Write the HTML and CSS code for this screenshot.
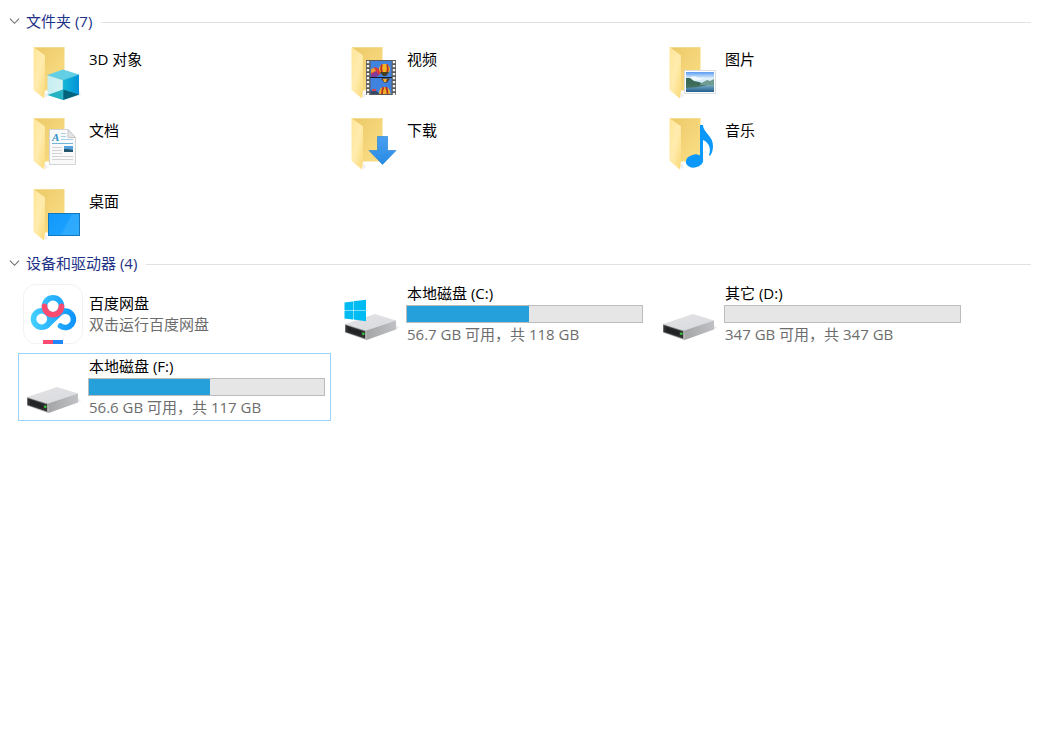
FILE: index.html
```html
<!DOCTYPE html>
<html lang="zh-CN">
<head>
    <meta charset="UTF-8">
    <meta name="viewport" content="width=device-width, initial-scale=1.0">
    <title>此电脑</title>
    <link rel="stylesheet" href="styles.css">
</head>
<body>
    <!-- shared shapes -->
    <svg class="defs" width="0" height="0" aria-hidden="true">
        <defs>
            <linearGradient id="back" x1="0" y1="0" x2="1" y2="1">
                <stop offset="0" stop-color="#ecc968"/>
                <stop offset="1" stop-color="#fbdf87"/>
            </linearGradient>
            <linearGradient id="flap" x1="0" y1="0" x2="1" y2="1">
                <stop offset="0" stop-color="#ffe599"/>
                <stop offset="0.5" stop-color="#ffecae"/>
                <stop offset="1" stop-color="#fbd978"/>
            </linearGradient>
            <linearGradient id="sky" x1="0" y1="0" x2="0" y2="1">
                <stop offset="0" stop-color="#5b9bf2"/>
                <stop offset="0.5" stop-color="#e2f2fb"/>
                <stop offset="1" stop-color="#b9dcec"/>
            </linearGradient>
            <linearGradient id="sea" x1="0" y1="0" x2="0" y2="1">
                <stop offset="0" stop-color="#79abc4"/>
                <stop offset="1" stop-color="#245e8e"/>
            </linearGradient>
            <linearGradient id="screen" x1="0" y1="0" x2="1" y2="1">
                <stop offset="0" stop-color="#1298fb"/>
                <stop offset="1" stop-color="#1ea5ff"/>
            </linearGradient>
            <linearGradient id="arrow" x1="0" y1="0" x2="0" y2="1">
                <stop offset="0" stop-color="#4a9ff0"/>
                <stop offset="1" stop-color="#278be4"/>
            </linearGradient>
            <linearGradient id="cube-left" x1="0" y1="0" x2="1" y2="0">
                <stop offset="0" stop-color="#c4eef2"/>
                <stop offset="1" stop-color="#d8f2f3"/>
            </linearGradient>
            <linearGradient id="cube-right" x1="0" y1="0" x2="1" y2="0">
                <stop offset="0" stop-color="#16b8d6"/>
                <stop offset="1" stop-color="#0292da"/>
            </linearGradient>
            <linearGradient id="cloud" gradientUnits="userSpaceOnUse" x1="8" y1="0" x2="53" y2="0">
                <stop offset="0" stop-color="#45d0ff"/>
                <stop offset="1" stop-color="#0d92fd"/>
            </linearGradient>
            <linearGradient id="drive-top" x1="0" y1="0" x2="1" y2="1">
                <stop offset="0" stop-color="#e4e4e6"/>
                <stop offset="1" stop-color="#d8d9dd"/>
            </linearGradient>
            <linearGradient id="drive-side" x1="0" y1="0" x2="1" y2="0">
                <stop offset="0" stop-color="#a4a5a7"/>
                <stop offset="1" stop-color="#c0c1c4"/>
            </linearGradient>
        </defs>
        <symbol id="folder" viewBox="0 0 60 60">
            <path d="M11 5h30.500v43.500H20z" fill="url(#back)"/>
            <path d="M11 5.500h30" stroke="#f6dc91" stroke-width="1"/>
            <path d="M22 50l3 4-3 2z" fill="#eeeeee"/>
            <path d="M10.500 5L22 13.500V48.500l-1 8L10.500 48z" fill="url(#flap)"/>
        </symbol>
        <symbol id="drive" viewBox="0 0 60 60">
            <path d="M25 56.500L58 44l-3-3-30 13z" fill="#eaeaea"/>
            <path d="M4 40L34 30l21 6.500L25 46.500z" fill="url(#drive-top)"/>
            <path d="M25 46.500l30-10V45.500L25.500 56z" fill="url(#drive-side)"/>
            <path d="M4 40l21 6.500.500 9.500L4 48.500z" fill="#a4a5a7"/>
            <path d="M4.500 41l19.500 6.300V54.500L4.500 48z" fill="#303133"/>
            <path d="M7 43l13 4.200v4.500L7 47.500z" fill="#222324"/>
            <circle cx="22.300" cy="49.700" r="1.300" fill="#35d13b"/>
        </symbol>
    </svg>

    <section class="group">
        <h2 class="group-title">
            <button type="button" class="toggle" aria-expanded="true">
                <svg class="chevron" viewBox="0 0 12 8" aria-hidden="true"><path d="M1 1.500l5 5 5-5"/></svg>
                文件夹 (7)
            </button>
        </h2>
        <div class="tiles folders">
            <a class="tile" href="#objects">
                <svg class="icon" viewBox="0 0 60 60" aria-hidden="true">
                    <use href="#folder"/>
                    <path d="M41 58l17-5-2-4z" fill="#e8e8e8"/>
                    <path d="M24.500 33L40 27.500 56 32.500 40 38z" fill="#62cfe5"/>
                    <path d="M24.500 33L40 38v20l-15.500-5z" fill="url(#cube-left)"/>
                    <path d="M40 38l16-5.500V52.500L40 58z" fill="url(#cube-right)"/>
                    <path d="M24.500 53L40 47.500V58z" fill="#25b3c4"/>
                    <path d="M40 47.500l16 5L40 58z" fill="#04647c"/>
                    <path d="M24.500 33L40 38l16-5.500M40 38v20" fill="none" stroke="#40bfd8" stroke-width="0.500"/>
                </svg>
                <span class="name">3D 对象</span>
            </a>
            <a class="tile" href="#videos">
                <svg class="icon" viewBox="0 0 60 60" aria-hidden="true">
                    <use href="#folder"/>
                    <rect x="25" y="18" width="30" height="35" fill="#5a5a5a"/>
                    <path d="M27 19v34M53 19v34" stroke="#f2f2f2" stroke-width="2.400" stroke-dasharray="2.300 1.700"/>
                    <rect x="29.500" y="19" width="21" height="16" fill="#3f82e0"/>
                    <rect x="29.500" y="36" width="21" height="16" fill="#3f82e0"/>
                    <path d="M30 28l4-3 4 2 2 4-3 3h-7z" fill="#d93a3e"/>
                    <path d="M30 33l5-4 3 4-3 2h-5z" fill="#803b9c"/>
                    <path d="M30 27l3-1 2 3-5 2z" fill="#ee9d36"/>
                    <ellipse cx="43.500" cy="27" rx="5.500" ry="5.200" fill="#f0b323"/>
                    <path d="M41 22.500q-2 5 1 10M46 22.500q2 5-1 10" fill="none" stroke="#b92c28" stroke-width="1.800"/>
                    <path d="M39 30h9l-3 4h-3z" fill="#443e25"/>
                    <path d="M40 36.500h9l-3 4h-3z" fill="#5a321f"/>
                    <path d="M42 37h4l-1 3h-2z" fill="#efb42d"/>
                    <path d="M38 52q0-7 5.500-7t6 7z" fill="#edb42a"/>
                    <path d="M41 52q0-4 1.500-7M46.500 52q0-4-1.500-7" fill="none" stroke="#b92c28" stroke-width="1.800"/>
                    <path d="M29.500 49l4-2 5 5h-9z" fill="#39496c"/>
                    <path d="M31 47h4v2h-4z" fill="#d34350"/>
                    <path d="M29 35.500h22" stroke="#171c2a" stroke-width="1"/>
                </svg>
                <span class="name">视频</span>
            </a>
            <a class="tile" href="#pictures">
                <svg class="icon" viewBox="0 0 60 60" aria-hidden="true">
                    <use href="#folder"/>
                    <rect x="25.500" y="28.500" width="31" height="23" fill="#ffffff" stroke="#dadde1"/>
                    <rect x="27" y="30" width="28" height="13" fill="url(#sky)"/>
                    <path d="M30 36q4-3 8-1t7 0l-4 3H32z" fill="#eef7fd"/>
                    <path d="M27 36l4 0 4 3 5 1 5 2 10 1v1H27z" fill="#3d6b59"/>
                    <path d="M41 42l7-4 3 1 4-2v6H41z" fill="#6f9b91"/>
                    <path d="M27 43h28v7H27z" fill="url(#sea)"/>
                    <path d="M27 43h21l-10 2-11 1z" fill="#42705e"/>
                </svg>
                <span class="name">图片</span>
            </a>
            <a class="tile" href="#documents">
                <svg class="icon" viewBox="0 0 60 60" aria-hidden="true">
                    <use href="#folder"/>
                    <path d="M26.500 16.500H45l7.500 8v27h-26z" fill="#f9f9f9" stroke="#d2d4d6"/>
                    <path d="M45 16.500v8h7.500z" fill="#e4e5e6" stroke="#c3c5c7"/>
                    <path d="M38 20.500h5M38 23.500h5M38 26.500h12" stroke="#a8cfe3"/>
                    <path d="M29 30.500h21" stroke="#6db5da"/>
                    <path d="M29 34.500h10M29 37.500h10M29 40.500h10M29 43.500h21M29 46.500h21" stroke="#d2d4d6"/>
                    <path d="M41 33h9v6h-9z" fill="#55a2dd"/>
                    <path d="M41 36l4 0 5 1v2h-9z" fill="#24556f"/>
                    <text x="29" y="28" class="doc-letter">A</text>
                </svg>
                <span class="name">文档</span>
            </a>
            <a class="tile" href="#downloads">
                <svg class="icon" viewBox="0 0 60 60" aria-hidden="true">
                    <use href="#folder"/>
                    <path d="M36.500 23.500h10v14H55L41.500 51.500 28 37.500h8.500z" fill="url(#arrow)" stroke="#2d86d6" stroke-width="0.700"/>
                </svg>
                <span class="name">下载</span>
            </a>
            <a class="tile" href="#music">
                <svg class="icon" viewBox="0 0 60 60" aria-hidden="true">
                    <use href="#folder"/>
                    <path d="M41 12h3c0 8 10 10 10 21 0 4-1 7-3 10l-1-1c2-5 1-12-6-15v20h-3z" fill="#0c98f8"/>
                    <ellipse cx="35.500" cy="48" rx="8.800" ry="6.500" transform="rotate(-12 35.500 48)" fill="#0c98f8"/>
                </svg>
                <span class="name">音乐</span>
            </a>
            <a class="tile" href="#desktop">
                <svg class="icon" viewBox="0 0 60 60" aria-hidden="true">
                    <use href="#folder"/>
                    <rect x="25.500" y="29.500" width="31" height="22" fill="url(#screen)" stroke="#1477bd"/>
                    <path d="M56 30v21H38L49 30z" fill="#53baff" opacity="0.350"/>
                </svg>
                <span class="name">桌面</span>
            </a>
        </div>
    </section>

    <section class="group">
        <h2 class="group-title">
            <button type="button" class="toggle" aria-expanded="true">
                <svg class="chevron" viewBox="0 0 12 8" aria-hidden="true"><path d="M1 1.500l5 5 5-5"/></svg>
                设备和驱动器 (4)
            </button>
        </h2>
        <div class="tiles drives">
            <a class="tile app" href="#netdisk">
                <svg class="icon" viewBox="0 0 60 60" aria-hidden="true">
                    <rect x="0.500" y="0.500" width="59" height="59" rx="12" fill="#ffffff" stroke="#f2f2f2"/>
                    <g fill="none" stroke-width="5.600" stroke-linecap="round">
                        <circle cx="18.700" cy="35" r="8.200" stroke="url(#cloud)"/>
                        <path d="M24 41.500L36 30a8.200 8.200 0 1 1 1.500 12" stroke="url(#cloud)"/>
                        <circle cx="30" cy="22.300" r="8.500" stroke="url(#cloud)"/>
                        <path d="M21.500 22.300a8.500 8.500 0 0 0 17 0" stroke="#fc4b70"/>
                    </g>
                    <path d="M20 56h10v4H20z" fill="#fc4b70"/>
                    <path d="M30 56h10v4H30z" fill="#2187fb"/>
                </svg>
                <span class="info">
                    <span class="name">百度网盘</span>
                    <span class="detail">双击运行百度网盘</span>
                </span>
            </a>
            <a class="tile" href="#c">
                <svg class="icon" viewBox="0 0 60 60" aria-hidden="true">
                    <use href="#drive"/>
                    <path d="M3.500 18.500l8.500-1V26H3.500zM12.500 17.300l12.500-1.600V26H12.500zM3.500 26.500H12v9l-8.500-1zM12.500 26.500h12.500v10.700l-12.500-1.600z" fill="#00bcf2"/>
                </svg>
                <span class="info">
                    <label class="name" for="disk-c">本地磁盘 (C:)</label>
                    <progress class="usage" id="disk-c" value="61.3" max="118"></progress>
                    <span class="detail">56.7 GB 可用，共 118 GB</span>
                </span>
            </a>
            <a class="tile" href="#d">
                <svg class="icon" viewBox="0 0 60 60" aria-hidden="true"><use href="#drive"/></svg>
                <span class="info">
                    <label class="name" for="disk-d">其它 (D:)</label>
                    <progress class="usage" id="disk-d" value="0" max="347"></progress>
                    <span class="detail">347 GB 可用，共 347 GB</span>
                </span>
            </a>
            <a class="tile selected" href="#f">
                <svg class="icon" viewBox="0 0 60 60" aria-hidden="true"><use href="#drive"/></svg>
                <span class="info">
                    <label class="name" for="disk-f">本地磁盘 (F:)</label>
                    <progress class="usage" id="disk-f" value="60.4" max="117"></progress>
                    <span class="detail">56.6 GB 可用，共 117 GB</span>
                </span>
            </a>
        </div>
    </section>
</body>
</html>
```

FILE: styles.css
```css
* {
    box-sizing: border-box;
}
body {
    margin: 0;
    padding: 6px 9px;
    background: #fff;
    color: #000;
    font-family: "Open Sans", "Noto Sans CJK SC", sans-serif;
    font-size: 15px;
    line-height: 20px;
}
.defs {
    position: absolute;
}
.group {
    margin-bottom: 2px;
}
.group-title {
    display: flex;
    align-items: center;
    gap: 9px;
    height: 32px;
    margin: 0;
}
.group-title::after {
    content: "";
    flex: 1;
    height: 1px;
    background: #e2e2e2;
}
.toggle {
    display: flex;
    align-items: center;
    gap: 6px;
    padding: 0 0 2px;
    border: none;
    background: none;
    color: #1e3287;
    font: inherit;
    font-size: 15px;
    font-weight: 400;
    line-height: 20px;
}
.chevron {
    width: 11px;
    height: 8px;
    fill: none;
    stroke: #6d6d6d;
    stroke-width: 1.2;
}
/* tiles */
.tiles {
    display: grid;
    grid-template-columns: repeat(auto-fill, 313px);
    gap: 5px;
    padding-left: 9px;
}
.folders {
    grid-auto-rows: 66px;
}
.drives {
    grid-auto-rows: 68px;
}
.tile {
    display: flex;
    align-items: flex-start;
    gap: 5px;
    padding: 3px 5px 3px 4px;
    border: 1px solid transparent;
    color: inherit;
    text-decoration: none;
}
.tile:hover {
    background: #e5f3ff;
}
.selected {
    border-color: #99d1ff;
}
.icon {
    flex: none;
    width: 60px;
    height: 60px;
}
.name, .detail {
    padding-left: 1px;
}
.folders .name {
    padding-top: 7px;
}
.info {
    display: flex;
    flex: 1;
    flex-direction: column;
}
.drives .name {
    line-height: 18px;
}
.app .info {
    gap: 2px;
    padding-top: 10px;
}
.detail {
    color: #6d6d6d;
}
.usage {
    appearance: none;
    width: 100%;
    height: 18px;
    margin: 3px 0 1px;
    border: 1px solid #bcbcbc;
    background: #e6e6e6;
}
.usage::-webkit-progress-bar {
    background: #e6e6e6;
}
.usage::-webkit-progress-value {
    background: #26a0da;
}
.doc-letter {
    font: italic bold 11px "Liberation Serif", serif;
    fill: #2f8fc9;
}
```
